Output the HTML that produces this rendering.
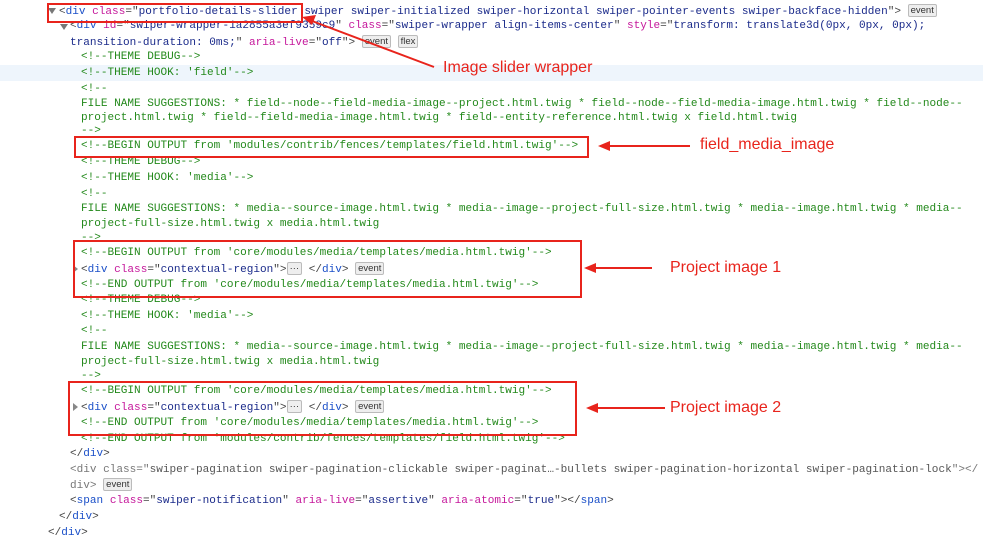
<!DOCTYPE html>
<html><head><meta charset="utf-8"><style>
body{margin:0;width:983px;height:541px;background:#fff;position:relative;overflow:hidden;font-family:"Liberation Mono",monospace;font-size:11.05px;}
.l{position:absolute;white-space:pre;height:15px;line-height:15px;color:#222}
.t{color:#1a4fc8}.a{color:#c5179b}.v{color:#1a2a8a}.c{color:#23891b}.p{color:#444}
.b{display:inline-block;font-family:"Liberation Sans",sans-serif;font-size:9.5px;line-height:11px;padding:0 2px;border:1px solid #bbb;border-radius:2px;background:#eee;color:#333;vertical-align:1px}
.tri{position:absolute;width:0;height:0}
.box{position:absolute;border:2px solid #e8241c}
.lab{position:absolute;font-family:"Liberation Sans",sans-serif;font-size:16px;color:#e8241c;white-space:nowrap}
.g{color:#777}
</style></head><body>
<div style="position:absolute;left:0;top:65px;width:983px;height:16px;background:#eef5fc"></div>
<div class="tri" style="left:48px;top:8px;border-left:4px solid transparent;border-right:4px solid transparent;border-top:6px solid #777"></div>
<div class="tri" style="left:60px;top:24px;border-left:4px solid transparent;border-right:4px solid transparent;border-top:6px solid #777"></div>
<div class="tri" style="left:73px;top:265px;border-top:4px solid transparent;border-bottom:4px solid transparent;border-left:5px solid #888"></div>
<div class="tri" style="left:73px;top:403px;border-top:4px solid transparent;border-bottom:4px solid transparent;border-left:5px solid #888"></div>

<div class="l" style="left:59px;top:4px"><span class="p">&lt;</span><span class="t">div</span> <span class="a">class</span><span class="p">="</span><span class="v">portfolio-details-slider swiper swiper-initialized swiper-horizontal swiper-pointer-events swiper-backface-hidden</span><span class="p">"&gt;</span> <span class="b">event</span></div>
<div class="l" style="left:70px;top:19px"><span class="p">&lt;</span><span class="t">div</span> <span class="a">id</span><span class="p">="</span><span class="v">swiper-wrapper-1a2855a3ef9359c9</span><span class="p">"</span> <span class="a">class</span><span class="p">="</span><span class="v">swiper-wrapper align-items-center</span><span class="p">"</span> <span class="a">style</span><span class="p">="</span><span class="v">transform: translate3d(0px, 0px, 0px);</span></div>
<div class="l" style="left:70px;top:35px"><span class="v">transition-duration: 0ms;</span><span class="p">"</span> <span class="a">aria-live</span><span class="p">="</span><span class="v">off</span><span class="p">"&gt;</span> <span class="b">event</span> <span class="b">flex</span></div>
<div class="l c" style="left:81px;top:50px">&lt;!--THEME DEBUG--&gt;</div>
<div class="l c" style="left:81px;top:66px">&lt;!--THEME HOOK: 'field'--&gt;</div>
<div class="l c" style="left:81px;top:82px">&lt;!--</div>
<div class="l c" style="left:81px;top:97px">FILE NAME SUGGESTIONS: * field--node--field-media-image--project.html.twig * field--node--field-media-image.html.twig * field--node--</div>
<div class="l c" style="left:81px;top:111px">project.html.twig * field--field-media-image.html.twig * field--entity-reference.html.twig x field.html.twig</div>
<div class="l c" style="left:81px;top:124px">--&gt;</div>
<div class="l c" style="left:81px;top:139px">&lt;!--BEGIN OUTPUT from 'modules/contrib/fences/templates/field.html.twig'--&gt;</div>
<div class="l c" style="left:81px;top:155px">&lt;!--THEME DEBUG--&gt;</div>
<div class="l c" style="left:81px;top:171px">&lt;!--THEME HOOK: 'media'--&gt;</div>
<div class="l c" style="left:81px;top:187px">&lt;!--</div>
<div class="l c" style="left:81px;top:202px">FILE NAME SUGGESTIONS: * media--source-image.html.twig * media--image--project-full-size.html.twig * media--image.html.twig * media--</div>
<div class="l c" style="left:81px;top:217px">project-full-size.html.twig x media.html.twig</div>
<div class="l c" style="left:81px;top:231px">--&gt;</div>
<div class="l c" style="left:81px;top:246px">&lt;!--BEGIN OUTPUT from 'core/modules/media/templates/media.html.twig'--&gt;</div>
<div class="l" style="left:81px;top:262px"><span class="p">&lt;</span><span class="t">div</span> <span class="a">class</span><span class="p">="</span><span class="v">contextual-region</span><span class="p">"&gt;</span><span class="b">···</span><span class="p"> &lt;/</span><span class="t">div</span><span class="p">&gt;</span> <span class="b">event</span></div>
<div class="l c" style="left:81px;top:278px">&lt;!--END OUTPUT from 'core/modules/media/templates/media.html.twig'--&gt;</div>
<div class="l c" style="left:81px;top:293px">&lt;!--THEME DEBUG--&gt;</div>
<div class="l c" style="left:81px;top:309px">&lt;!--THEME HOOK: 'media'--&gt;</div>
<div class="l c" style="left:81px;top:324px">&lt;!--</div>
<div class="l c" style="left:81px;top:340px">FILE NAME SUGGESTIONS: * media--source-image.html.twig * media--image--project-full-size.html.twig * media--image.html.twig * media--</div>
<div class="l c" style="left:81px;top:355px">project-full-size.html.twig x media.html.twig</div>
<div class="l c" style="left:81px;top:369px">--&gt;</div>
<div class="l c" style="left:81px;top:384px">&lt;!--BEGIN OUTPUT from 'core/modules/media/templates/media.html.twig'--&gt;</div>
<div class="l" style="left:81px;top:400px"><span class="p">&lt;</span><span class="t">div</span> <span class="a">class</span><span class="p">="</span><span class="v">contextual-region</span><span class="p">"&gt;</span><span class="b">···</span><span class="p"> &lt;/</span><span class="t">div</span><span class="p">&gt;</span> <span class="b">event</span></div>
<div class="l c" style="left:81px;top:416px">&lt;!--END OUTPUT from 'core/modules/media/templates/media.html.twig'--&gt;</div>
<div class="l c" style="left:81px;top:432px">&lt;!--END OUTPUT from 'modules/contrib/fences/templates/field.html.twig'--&gt;</div>
<div class="l" style="left:70px;top:447px"><span class="p">&lt;/</span><span class="t">div</span><span class="p">&gt;</span></div>
<div class="l g" style="left:70px;top:463px">&lt;div class="<span style="color:#555">swiper-pagination swiper-pagination-clickable swiper-paginat…-bullets swiper-pagination-horizontal swiper-pagination-lock</span>"&gt;&lt;/</div>
<div class="l g" style="left:70px;top:478px">div&gt; <span class="b">event</span></div>
<div class="l" style="left:70px;top:494px"><span class="p">&lt;</span><span class="t">span</span> <span class="a">class</span><span class="p">="</span><span class="v">swiper-notification</span><span class="p">"</span> <span class="a">aria-live</span><span class="p">="</span><span class="v">assertive</span><span class="p">"</span> <span class="a">aria-atomic</span><span class="p">="</span><span class="v">true</span><span class="p">"&gt;&lt;/</span><span class="t">span</span><span class="p">&gt;</span></div>
<div class="l" style="left:59px;top:510px"><span class="p">&lt;/</span><span class="t">div</span><span class="p">&gt;</span></div>
<div class="l" style="left:48px;top:526px"><span class="p">&lt;/</span><span class="t">div</span><span class="p">&gt;</span></div>

<div class="box" style="left:47px;top:3px;width:252px;height:16px"></div>
<div class="box" style="left:74px;top:136px;width:511px;height:18px"></div>
<div class="box" style="left:73px;top:240px;width:505px;height:54px"></div>
<div class="box" style="left:68px;top:381px;width:505px;height:51px"></div>

<svg style="position:absolute;left:0;top:0" width="983" height="541">
<g stroke="#e8241c" stroke-width="2" fill="#e8241c">
<line x1="434" y1="67" x2="312" y2="21"/><polygon points="302,17 316,15 312,25" stroke="none"/>
<line x1="690" y1="146" x2="608" y2="146"/><polygon points="598,146 610,141 610,151" stroke="none"/>
<line x1="652" y1="268" x2="594" y2="268"/><polygon points="584,268 596,263 596,273" stroke="none"/>
<line x1="665" y1="408" x2="596" y2="408"/><polygon points="586,408 598,403 598,413" stroke="none"/>
</g></svg>
<div class="lab" style="left:443px;top:59px">Image slider wrapper</div>
<div class="lab" style="left:700px;top:136px">field_media_image</div>
<div class="lab" style="left:670px;top:259px">Project image 1</div>
<div class="lab" style="left:670px;top:399px">Project image 2</div>
</body></html>
